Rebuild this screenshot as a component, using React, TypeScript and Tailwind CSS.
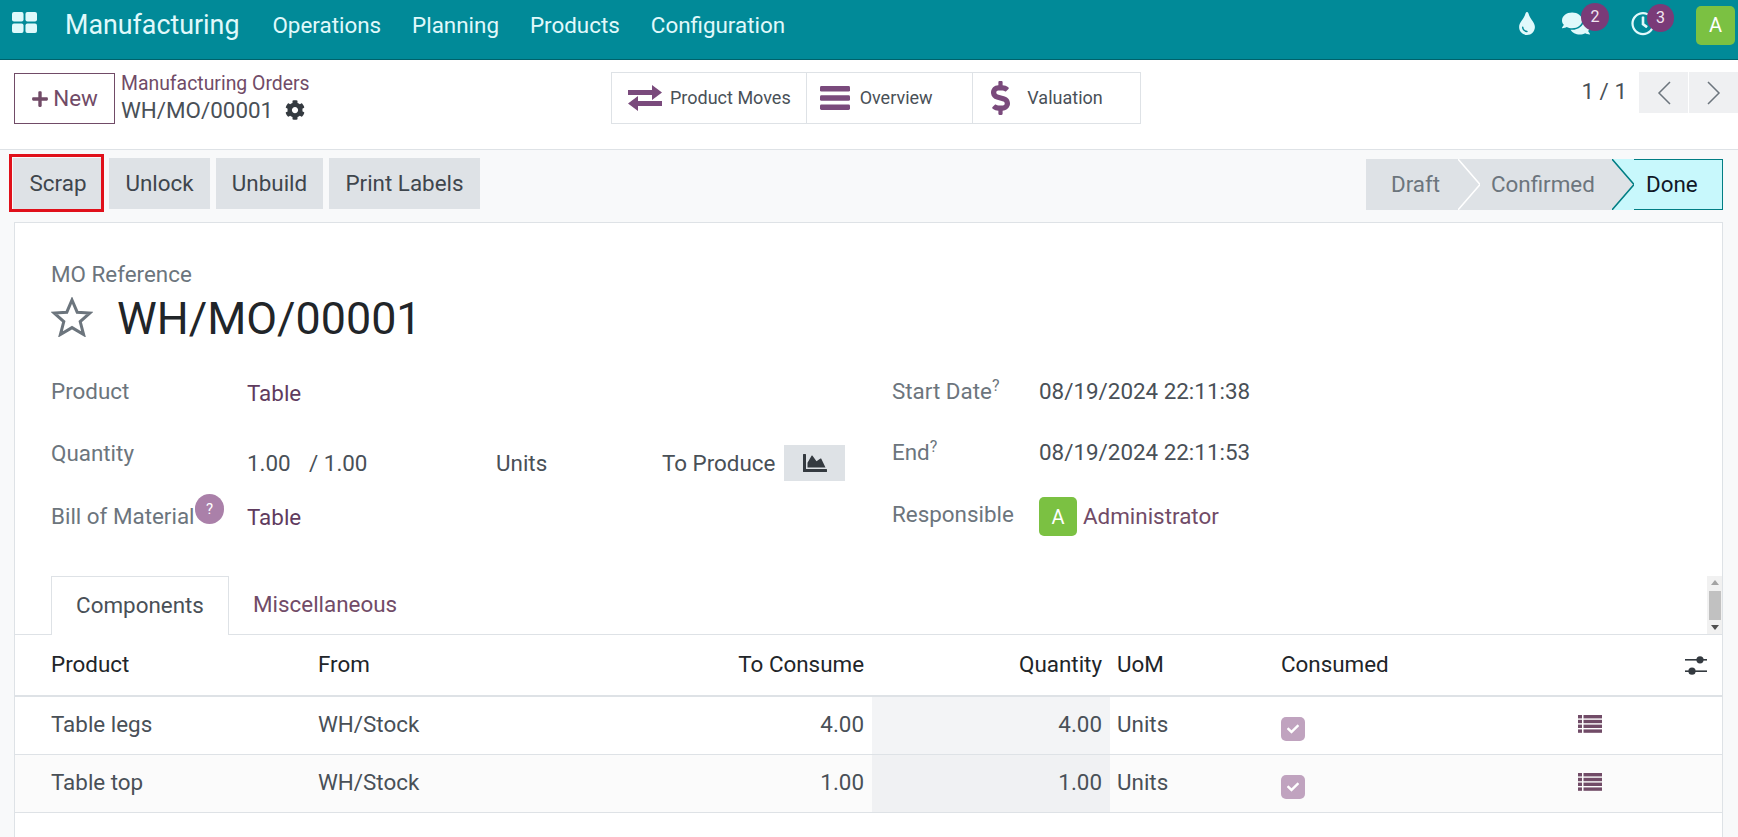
import { FaCog, FaComments, FaDollarSign, FaTint, FaRegClock, FaChartArea, FaCheck, FaPlus } from "react-icons/fa";

const AppsIcon = () => (
  <svg viewBox="0 0 26 21" className="mb-[5px] w-[25px] h-[21px]" fill="#dff9fb" preserveAspectRatio="none">
    <rect x="0" y="0" width="12" height="9.5" rx="2" />
    <rect x="14" y="0" width="12" height="9.5" rx="2" />
    <rect x="0" y="11.5" width="12" height="9.5" rx="2" />
    <rect x="14" y="11.5" width="12" height="9.5" rx="2" />
  </svg>
);

const ArrowsIcon = () => (
  <svg viewBox="0 0 34 26" className="ml-[16px] mr-[8px] h-[26px] w-[34px]" fill="#7a4a7c">
    <polygon points="0,5 24,5 24,0 34,7.5 24,15 24,10 0,10" />
    <polygon points="34,16 10,16 10,11 0,18.5 10,26 10,21 34,21" />
  </svg>
);

const BarsIcon = () => (
  <svg viewBox="0 0 30 24" className="ml-[13px] mr-[10px] h-[24px] w-[30px]" fill="#7a4a7c">
    <rect x="0" y="0" width="30" height="5.6" rx="1.4" />
    <rect x="0" y="9.2" width="30" height="5.6" rx="1.4" />
    <rect x="0" y="18.4" width="30" height="5.6" rx="1.4" />
  </svg>
);

const StarIcon = () => (
  <svg viewBox="0 0 42 40" className="mb-[5px] h-[40px] w-[42px]" fill="none" stroke="#6c757d" strokeWidth="3">
    <polygon points="21,3 26.2,15.2 39,16 29.2,24.6 32.6,37.5 21,30.6 9.4,37.5 12.8,24.6 3,16 15.8,15.2" />
  </svg>
);

const PagerChevron = ({ points }: { points: string }) => (
  <svg viewBox="0 0 14 24" className="h-[24px] w-[14px]" fill="none" stroke="#6c757d" strokeWidth="1.5">
    <polyline points={points} />
  </svg>
);

const ListIcon = () => (
  <svg viewBox="0 0 24 18" className="w-[24px] h-[18px]" fill="#714b67">
    <rect x="0" y="0" width="4" height="3.4" />
    <rect x="5.5" y="0" width="18.5" height="3.4" />
    <rect x="0" y="4.8" width="4" height="3.4" />
    <rect x="5.5" y="4.8" width="18.5" height="3.4" />
    <rect x="0" y="9.6" width="4" height="3.4" />
    <rect x="5.5" y="9.6" width="18.5" height="3.4" />
    <rect x="0" y="14.4" width="4" height="3.4" />
    <rect x="5.5" y="14.4" width="18.5" height="3.4" />
  </svg>
);

const SlidersIcon = () => (
  <svg viewBox="0 0 22 19" className="w-[22px] h-[19px]" fill="#343a40">
    <rect x="0" y="3" width="22" height="1.6" />
    <circle cx="15" cy="3.8" r="3.6" />
    <rect x="0" y="14.4" width="22" height="1.6" />
    <circle cx="7" cy="15.2" r="3.6" />
  </svg>
);

const Chevron = ({ left, right, line }: { left: string; right: string; line: string }) => (
  <svg viewBox="0 0 22 51" preserveAspectRatio="none" className="w-[22px] h-[51px] shrink-0">
    <rect width="22" height="51" fill={right} />
    <polygon points="0,0 22,25.5 0,51" fill={left} />
    <polyline points="0,0 22,25.5 0,51" fill="none" stroke={line} strokeWidth="1.5" />
  </svg>
);

const CheckBox = () => (
  <span className="flex h-[24px] w-[24px] items-center justify-center rounded-[5px] bg-[#c0a3bf] text-white">
    <FaCheck className="h-[12px] w-[12px]" />
  </span>
);

const columns = "grid grid-cols-[303px_282px_272px_238px_171px_297px_107px_37px]";

const rows = [
  { name: "Table legs", toConsume: "4.00", qty: "4.00", stripe: "", cell: "bg-[#f3f4f6]" },
  { name: "Table top", toConsume: "1.00", qty: "1.00", stripe: "bg-[#fbfbfb]", cell: "bg-[#f0f1f3]" },
];

const StatButton = ({ icon, label, width, border }: { icon: React.ReactNode; label: string; width: string; border?: boolean }) => (
  <div className={`flex items-center ${width} ${border ? "border-r border-[#dee2e6]" : ""}`}>
    {icon}
    <span className="mb-[1px] text-[18px] text-[#495057]">{label}</span>
  </div>
);

const ActionButton = ({ label, width }: { label: string; width: string }) => (
  <div className={`flex h-[51px] items-center justify-center bg-[#dee2e6] text-[22.4px] text-[#3f464d] ${width}`}>{label}</div>
);

export default function App() {
  return (
    <div className="flex h-[837px] w-[1738px] flex-col overflow-hidden bg-[#f8f9fa] font-['Roboto',sans-serif] text-[#495057]">
      {/* top navbar */}
      <header className="flex h-[60px] shrink-0 items-center border-b border-[#00626b] bg-[#018a98] pb-[9px] pl-[12px] text-[#e0f9fb]">
        <AppsIcon />
        <span className="ml-[28px] text-[26.8px]">Manufacturing</span>
        <nav className="ml-[33px] mt-[1px] flex gap-[31px] text-[22.4px]">
          <span>Operations</span>
          <span>Planning</span>
          <span>Products</span>
          <span>Configuration</span>
        </nav>
        <div className="ml-auto flex items-center pr-[3px]">
          <FaTint className="mb-[4px] h-[23px] w-[18px]" />
          <span className="relative ml-[26px] w-[28px]">
            <FaComments className="mb-[4px] h-[25px] w-[28px]" />
            <span className="absolute left-[19px] top-[-8px] flex h-[28px] w-[28px] items-center justify-center rounded-full bg-[#7a3b78] text-[16px] text-[#f2e6f2]">2</span>
          </span>
          <span className="relative ml-[41px] w-[24px]">
            <FaRegClock className="mb-[4px] h-[25px] w-[24px]" />
            <span className="absolute left-[16px] top-[-7px] flex h-[28px] w-[27px] items-center justify-center rounded-full bg-[#7a3b78] text-[16px] text-[#f2e6f2]">3</span>
          </span>
          <span className="ml-[41px] flex h-[39px] w-[39px] items-center justify-center rounded-[5px] bg-[#7bc142] text-[20px] text-white">A</span>
        </div>
      </header>

      {/* control panel */}
      <div className="flex h-[90px] shrink-0 border-b border-[#dee2e6] bg-white pl-[14px] pt-[12px]">
        <div className="mt-[1px] flex h-[51px] w-[101px] items-center justify-center gap-[4px] border border-[#714b67] text-[22.4px] text-[#714b67]">
          <FaPlus className="h-[18px] w-[18px]" />
          <span>New</span>
        </div>
        <div className="ml-[6px] flex w-[490px] flex-col">
          <span className="mt-[1px] text-[19.4px] leading-[22px] text-[#714b67]">Manufacturing Orders</span>
          <span className="mt-[2px] flex items-center gap-[12px] text-[22.4px] leading-[26px] text-[#495057]">
            WH/MO/00001
            <FaCog className="h-[20px] w-[20px] text-[#343a40]" />
          </span>
        </div>
        <div className="flex h-[52px] w-[530px] border border-[#dee2e6]">
          <StatButton width="w-[195px]" border label="Product Moves" icon={<ArrowsIcon />} />
          <StatButton width="w-[167px]" border label="Overview" icon={<BarsIcon />} />
          <StatButton
            width="w-[167px]"
            label="Valuation"
            icon={<FaDollarSign className="ml-[18px] mr-[17px] h-[34px] w-[19px] text-[#7a4a7c]" />}
          />
        </div>
        <div className="ml-auto flex h-[41px] items-center">
          <span className="mb-[2px] mr-[12px] text-[22.4px] text-[#495057]">1 / 1</span>
          <div className="flex h-[41px] w-[49px] items-center justify-center bg-[#eff0f2]">
            <PagerChevron points="13,1 2,12 13,23" />
          </div>
          <div className="ml-[1px] flex h-[41px] w-[49px] items-center justify-center bg-[#eff0f2]">
            <PagerChevron points="1,1 12,12 1,23" />
          </div>
        </div>
      </div>

      {/* actions and status */}
      <div className="flex h-[72px] shrink-0 pl-[13px] pr-[15px] pt-[8px]">
        <div className="relative w-[91px]">
          <ActionButton label="Scrap" width="w-[90px]" />
          <span className="absolute left-[-4px] top-[-4px] h-[58px] w-[95px] border-[3px] border-[#e0101a]"></span>
        </div>
        <div className="ml-[5px] flex gap-[6px]">
          <ActionButton label="Unlock" width="w-[101px]" />
          <ActionButton label="Unbuild" width="w-[107px]" />
          <ActionButton label="Print Labels" width="w-[151px]" />
        </div>
        <div className="ml-auto mt-[1px] flex h-[51px] text-[22.4px]">
          <div className="flex w-[92px] items-center bg-[#dee2e6] pl-[25px] text-[#6c757d]">Draft</div>
          <Chevron left="#dee2e6" right="#dee2e6" line="#ffffff" />
          <div className="flex w-[132px] items-center bg-[#dee2e6] pl-[11px] text-[#6c757d]">Confirmed</div>
          <Chevron left="#dee2e6" right="#c8f8fc" line="#017e84" />
          <div className="flex w-[89px] items-center border-y border-r border-[#017e84] bg-[#c8f8fc] pl-[12px] text-[#111827]">Done</div>
        </div>
      </div>

      {/* form sheet */}
      <main className="ml-[14px] flex w-[1709px] flex-1 flex-col border border-b-0 border-[#dee2e6] bg-white">
        <div className="pl-[36px]">
          <div className="mt-[39px] text-[22.4px] leading-[24px] text-[#6c757d]">MO Reference</div>
          <div className="mt-[11px] flex h-[44px] items-center">
            <StarIcon />
            <h1 className="ml-[24px] text-[44.8px] leading-[44px] text-[#212529]">WH/MO/00001</h1>
          </div>
          <div className="mt-[34px] flex text-[22.4px]">
            {/* left group */}
            <div className="w-[841px]">
              <div className="flex h-[62px]">
                <span className="w-[196px] leading-[32px] text-[#6c757d]">Product</span>
                <span className="pt-[2px] leading-[32px] text-[#5f3b5e]">Table</span>
              </div>
              <div className="flex h-[63px]">
                <span className="w-[196px] leading-[32px] text-[#6c757d]">Quantity</span>
                <span className="flex h-[36px] pt-[10px] leading-[32px]">
                  <span className="w-[62px]">1.00</span>
                  <span className="w-[187px]">/ 1.00</span>
                  <span className="w-[166px]">Units</span>
                  <span>To Produce</span>
                </span>
                <span className="ml-[9px] mt-[8px] flex h-[36px] w-[61px] items-center justify-center bg-[#dee2e6]">
                  <FaChartArea className="h-[24px] w-[28px] text-[#343a40]" />
                </span>
              </div>
              <div className="flex h-[33px]">
                <span className="relative w-[196px] leading-[32px] text-[#6c757d]">
                  Bill of Material
                  <span className="absolute left-[144px] top-[-6px] flex h-[30px] w-[29px] items-center justify-center rounded-full bg-[#aa80a9] text-[15px] text-white">?</span>
                </span>
                <span className="pt-[1px] leading-[32px] text-[#5f3b5e]">Table</span>
              </div>
            </div>
            {/* right group */}
            <div>
              <div className="flex h-[61px]">
                <span className="w-[147px] leading-[32px] text-[#6c757d]">
                  Start Date<sup className="text-[16px]">?</sup>
                </span>
                <span className="leading-[32px]">08/19/2024 22:11:38</span>
              </div>
              <div className="flex h-[61px]">
                <span className="w-[147px] leading-[32px] text-[#6c757d]">
                  End<sup className="text-[16px]">?</sup>
                </span>
                <span className="leading-[32px]">08/19/2024 22:11:53</span>
              </div>
              <div className="flex">
                <span className="w-[147px] pt-[1px] leading-[32px] text-[#6c757d]">Responsible</span>
                <span className="flex h-[39px] w-[38px] items-center justify-center rounded-[5px] bg-[#7bc142] text-[20px] text-white">A</span>
                <span className="ml-[6px] pt-[3px] leading-[32px] text-[#714b67]">Administrator</span>
              </div>
            </div>
          </div>
        </div>

        {/* notebook tabs */}
        <div className="relative mt-[40px] flex h-[59px] shrink-0 border-b border-[#dee2e6] pl-[36px] text-[22.4px]">
          <div className="mb-[-1px] flex w-[178px] items-center justify-center border border-b-0 border-[#dee2e6] bg-white">Components</div>
          <div className="ml-[24px] flex items-center text-[#714b67]">Miscellaneous</div>
          <div className="absolute bottom-0 right-0 flex h-[58px] w-[15px] flex-col items-center justify-between bg-[#f1f1f1] py-[4px]">
            <span className="h-0 w-0 border-x-[4px] border-b-[5px] border-x-transparent border-b-[#a3a3a3]"></span>
            <span className="h-[29px] w-[12px] bg-[#c1c1c1]"></span>
            <span className="h-0 w-0 border-x-[4px] border-t-[5px] border-x-transparent border-t-[#505050]"></span>
          </div>
        </div>

        {/* components table */}
        <div className={`${columns} h-[62px] shrink-0 items-center border-b-2 border-[#dee2e6] text-[22.4px] text-[#212529]`}>
          <span className="pl-[36px]">Product</span>
          <span>From</span>
          <span className="pr-[8px] text-right">To Consume</span>
          <span className="pr-[8px] text-right">Quantity</span>
          <span className="pl-[7px]">UoM</span>
          <span>Consumed</span>
          <span></span>
          <SlidersIcon />
        </div>
        {rows.map((r) => (
          <div key={r.name} className={`${columns} h-[58px] shrink-0 border-b border-[#dee2e6] text-[22.4px] ${r.stripe}`}>
            <span className="pl-[36px] leading-[55px]">{r.name}</span>
            <span className="leading-[55px]">WH/Stock</span>
            <span className="pr-[8px] text-right leading-[55px]">{r.toConsume}</span>
            <span className={`pr-[8px] text-right leading-[55px] ${r.cell}`}>{r.qty}</span>
            <span className="pl-[7px] leading-[55px]">Units</span>
            <span className="pt-[20px]">
              <CheckBox />
            </span>
            <span className="pt-[18px]">
              <ListIcon />
            </span>
            <span></span>
          </div>
        ))}
      </main>
    </div>
  );
}
